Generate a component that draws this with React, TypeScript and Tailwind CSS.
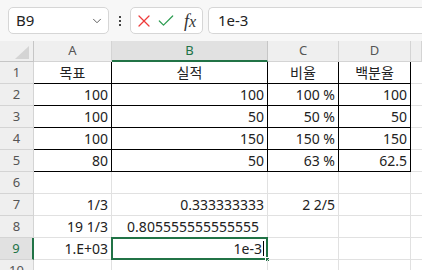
import { X, Check, ChevronDown } from 'lucide-react';

const cols = ['A', 'B', 'C', 'D', ''];

type Cell = { v: string; align?: 'r' | 'c'; pr?: string };

const rows: Cell[][] = [
  [{ v: '목표', align: 'c' }, { v: '실적', align: 'c' }, { v: '비율', align: 'c' }, { v: '백분율', align: 'c' }],
  [{ v: '100' }, { v: '100' }, { v: '100 %' }, { v: '100' }],
  [{ v: '100' }, { v: '50' }, { v: '50 %' }, { v: '50' }],
  [{ v: '100' }, { v: '150' }, { v: '150 %' }, { v: '150' }],
  [{ v: '80' }, { v: '50' }, { v: '63 %' }, { v: '62.5' }],
  [{ v: '' }, { v: '' }, { v: '' }, { v: '' }],
  [{ v: '1/3' }, { v: '0.333333333' }, { v: '2 2/5' }, { v: '' }],
  [{ v: '19 1/3' }, { v: '0.805555555555555', pr: 'pr-[8px]' }, { v: '' }, { v: '' }],
  [{ v: '1.E+03' }, { v: '1e-3' }, { v: '' }, { v: '' }],
  [{ v: '' }, { v: '' }, { v: '' }, { v: '' }],
];

export default function App() {
  return (
    <div className="w-[422px] h-[270px] overflow-hidden bg-white text-[#222]" style={{ fontFamily: '"Noto Sans", "Noto Sans CJK KR", sans-serif' }}>
      {/* formula bar */}
      <div className="h-[41px] bg-[#f7f7f7] flex items-start pt-[7px] pl-[8px]">
        <div className="w-[101px] h-[27px] bg-white border border-[#d6d6d6] rounded-[5px] flex items-center pl-[7px] pr-[4px] text-[15px]">
          <span className="flex-1 leading-none">B9</span>
          <ChevronDown className="w-[14px] h-[14px] text-[#555]" strokeWidth={1.6} />
        </div>
        <div className="w-[21px] h-[27px] flex flex-col items-center justify-center gap-[2px]">
          <span className="w-[2px] h-[2px] bg-[#444]" />
          <span className="w-[2px] h-[2px] bg-[#444]" />
          <span className="w-[2px] h-[2px] bg-[#444]" />
        </div>
        <div className="w-[73px] h-[27px] bg-white border border-[#d6d6d6] rounded-[5px] flex items-center pl-[3px] gap-[2px]">
          <X className="w-[20px] h-[20px] text-[#ee3b3b]" strokeWidth={1.5} />
          <Check className="w-[20px] h-[20px] text-[#2e9d52]" strokeWidth={1.5} />
          <span className="ml-[6px] text-[16px] italic text-[#333] leading-none" style={{ fontFamily: '"Liberation Serif", serif' }}>
            <span className="text-[18px]">f</span>x
          </span>
        </div>
        <div className="ml-[5px] flex-1 h-[27px] bg-white border border-r-0 border-[#d6d6d6] rounded-l-[5px] flex items-center pl-[9px] text-[15px]">
          1e-3
        </div>
      </div>

      {/* grid */}
      <div className="grid grid-cols-[34px_78px_156px_71px_72px_1fr] text-[14px]">
        <div className="h-[21px] bg-[#efefef] border-r border-b border-[#c6c6c6] relative">
          <div
            className="absolute right-[4px] bottom-[2px] w-[14px] h-[13px] bg-[#d4d4d4]"
            style={{ clipPath: 'polygon(100% 0, 100% 100%, 0 100%)' }}
          />
        </div>
        {cols.map((c) =>
          c === 'B' ? (
            <div key={c} className="h-[21px] bg-[#e1e1e1] border-r border-[#c6c6c6] border-b-2 border-b-[#217346] flex items-center justify-center text-[13px] text-[#217346]">
              {c}
            </div>
          ) : (
            <div key={c || 'x'} className="h-[21px] bg-[#efefef] border-r border-b border-[#d4d4d4] flex items-center justify-center text-[13px] text-[#555]">
              {c}
            </div>
          )
        )}

        {rows.map((r, i) => {
          const rowNo = i + 1;
          const selected = rowNo === 9;
          const boxed = rowNo <= 5;
          return [
            <div
              key={`h${rowNo}`}
              className={
                selected
                  ? 'h-[22px] bg-[#e1e1e1] border-r-2 border-r-[#217346] border-b border-b-[#d4d4d4] flex items-center justify-center text-[13px] text-[#217346]'
                  : 'h-[22px] bg-[#efefef] border-r border-b border-[#d4d4d4] flex items-center justify-center text-[13px] text-[#555]'
              }
            >
              {rowNo}
            </div>,
            ...r.map((cell, j) => {
              const isSel = selected && j === 1;
              return (
                <div
                  key={`c${rowNo}-${j}`}
                  className={`h-[22px] relative flex items-center whitespace-nowrap border-r border-b ${
                    boxed ? 'border-black' : 'border-[#e1e1e1]'
                  } ${cell.align === 'c' ? 'justify-center' : `justify-end ${cell.pr ?? 'pr-[3px]'}`}`}
                >
                  <span className="leading-none">{cell.v}</span>
                  {isSel && (
                    <>
                      <span className="w-px h-[15px] bg-black ml-[1px]" />
                      <div className="absolute -left-px -top-px right-[-1px] bottom-[-1px] border-2 border-[#217346]" />
                      <div className="absolute right-[-3px] bottom-[-3px] w-[5px] h-[5px] bg-[#217346] border border-white" />
                    </>
                  )}
                </div>
              );
            }),
            <div key={`e${rowNo}`} className="h-[22px] border-b border-[#e1e1e1]" />,
          ];
        })}
      </div>
    </div>
  );
}
